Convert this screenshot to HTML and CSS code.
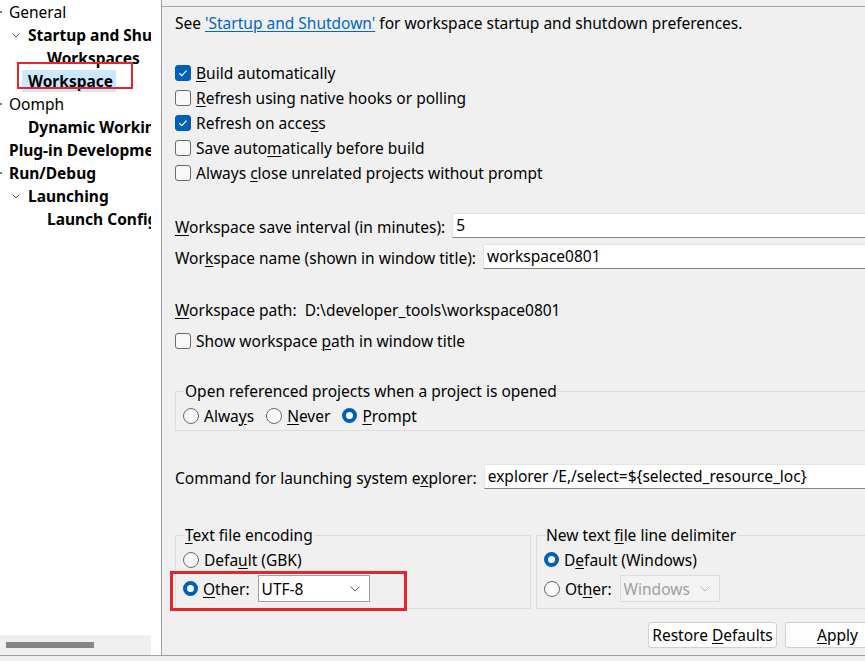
FILE: index.html
```html
<!DOCTYPE html>
<html>
<head>
<meta charset="utf-8">
<link rel="stylesheet" href="styles.css">
</head>
<body>
<div class="window">
  <div class="main">
    <div class="tree-pane">
      <div class="tree">
        <div class="node lvl0"><span class="twisty dot"></span><span class="label">General</span></div>
        <div class="node lvl1 bold"><svg class="chev" width="8" height="5" viewBox="0 0 8 5"><path d="M0.5 0.5 L4 4 L7.5 0.5" fill="none" stroke="#555" stroke-width="1"/></svg><span class="label">Startup and Shutdown</span></div>
        <div class="node lvl2 bold"><span class="label">Workspaces</span></div>
        <div class="node lvl1 bold marked"><span class="label sel">Workspace</span></div>
        <div class="node lvl0"><span class="twisty dot"></span><span class="label">Oomph</span></div>
        <div class="node lvl1 bold"><span class="label">Dynamic Working Sets</span></div>
        <div class="node lvl0 bold"><span class="label">Plug-in Development</span></div>
        <div class="node lvl0 bold"><span class="twisty dot"></span><span class="label">Run/Debug</span></div>
        <div class="node lvl1 bold"><svg class="chev" width="8" height="5" viewBox="0 0 8 5"><path d="M0.5 0.5 L4 4 L7.5 0.5" fill="none" stroke="#555" stroke-width="1"/></svg><span class="label">Launching</span></div>
        <div class="node lvl2 bold"><span class="label">Launch Configurations</span></div>
      </div>
      <div class="hscroll"><div class="thumb"></div></div>
    </div>
    <div class="right">
      <div class="page">
        <div class="intro">See <a class="link">'Startup and Shutdown'</a> for workspace startup and shutdown preferences.</div>

        <div class="checks">
          <div class="check-row"><span class="cb on"><svg width="16" height="16" viewBox="0 0 16 16"><path d="M4.3 8.3 L6.8 10.6 L11.6 5.6" fill="none" stroke="#fff" stroke-width="1.2"/></svg></span><span><u>B</u>uild automatically</span></div>
          <div class="check-row"><span class="cb"></span><span><u>R</u>efresh using native hooks or polling</span></div>
          <div class="check-row"><span class="cb on"><svg width="16" height="16" viewBox="0 0 16 16"><path d="M4.3 8.3 L6.8 10.6 L11.6 5.6" fill="none" stroke="#fff" stroke-width="1.2"/></svg></span><span>Refresh on acce<u>s</u>s</span></div>
          <div class="check-row"><span class="cb"></span><span>Save auto<u>m</u>atically before build</span></div>
          <div class="check-row"><span class="cb"></span><span>Always <u>c</u>lose unrelated projects without prompt</span></div>
        </div>

        <div class="field-row first"><span class="flabel"><u>W</u>orkspace save interval (in minutes):</span><span class="input">5</span></div>
        <div class="field-row second"><span class="flabel">Wor<u>k</u>space name (shown in window title):</span><span class="input">workspace0801</span></div>

        <div class="path-row"><u>W</u>orkspace path:&nbsp; D:\developer_tools\workspace0801</div>
        <div class="check-row show-path"><span class="cb"></span><span>Show workspace <u>p</u>ath in window title</span></div>

        <fieldset class="group open-group">
          <legend>Open referenced projects when a project is opened</legend>
          <div class="radio-line">
            <span class="radio-item"><span class="rb"></span>Alwa<u>y</u>s</span>
            <span class="radio-item"><span class="rb"></span><u>N</u>ever</span>
            <span class="radio-item"><span class="rb on"></span><u>P</u>rompt</span>
          </div>
        </fieldset>

        <div class="field-row cmd"><span class="flabel">Command for launching system e<u>x</u>plorer:</span><span class="input">explorer /E,/select=${selected_resource_loc}</span></div>

        <div class="groups">
          <fieldset class="group enc">
            <legend><u>T</u>ext file encoding</legend>
            <div class="radio-row"><span class="rb"></span>Defa<u>u</u>lt (GBK)</div>
            <div class="radio-row combo-row marked2"><span class="rb on"></span><u>O</u>ther:<span class="combo"><span class="cval">UTF-8</span><svg width="10" height="6" viewBox="0 0 10 6"><path d="M0.5 0.5 L5 5 L9.5 0.5" fill="none" stroke="#606060" stroke-width="1"/></svg></span></div>
          </fieldset>
          <fieldset class="group delim">
            <legend>New text <u>f</u>ile line delimiter</legend>
            <div class="radio-row"><span class="rb on"></span>D<u>e</u>fault (Windows)</div>
            <div class="radio-row combo-row"><span class="rb"></span>Ot<u>h</u>er:<span class="combo disabled"><span class="cval">Windows</span><svg width="10" height="6" viewBox="0 0 10 6"><path d="M0.5 0.5 L5 5 L9.5 0.5" fill="none" stroke="#b8b8b8" stroke-width="1"/></svg></span></div>
          </fieldset>
        </div>

        <div class="buttons">
          <span class="btn restore">Restore <u>D</u>efaults</span>
          <span class="btn apply"><u>A</u>pply</span>
        </div>
      </div>
    </div>
  </div>
  <div class="status"></div>
</div>
</body>
</html>
```

FILE: styles.css
```css
html, body {
  margin: 0;
  padding: 0;
}
body {
  background: #f0f0f0;
  font-family: "Noto Sans", "Open Sans", sans-serif;
  font-size: 15.5px;
  color: #000;
  overflow: hidden;
}
u { text-decoration: underline; text-underline-offset: 2px; text-decoration-thickness: 1px; }
.window {
  width: 865px;
  height: 661px;
  display: flex;
  flex-direction: column;
}
.main {
  height: 655px;
  display: flex;
  border-bottom: 1px solid #a0a0a0;
}
.status { flex: 1; background: #f0f0f0; }

/* ---------- tree ---------- */
.tree-pane {
  width: 161px;
  background: #fff;
  border-right: 1px solid #a0a0a0;
  display: flex;
  flex-direction: column;
  justify-content: space-between;
}
.tree {
  width: 151px;
  overflow: hidden;
  white-space: nowrap;
}
.node {
  height: 23px;
  display: flex;
  align-items: center;
  position: relative;
}
.node.bold { font-weight: 700; }
.lvl0 { padding-left: 9px; }
.lvl1 { padding-left: 28px; }
.lvl2 { padding-left: 47px; }
.twisty.dot {
  position: absolute;
  left: 0;
  top: 11px;
  width: 2px;
  height: 2px;
  background: #777;
}
.chev {
  position: absolute;
  left: 12px;
  top: 10px;
}
.label.sel {
  background: #cce8ff;
  margin-left: -6px;
  padding: 0 3px 0 6px;
  height: 22px;
  line-height: 22px;
}
.marked::after {
  content: "";
  position: absolute;
  left: 17px;
  top: -7px;
  width: 112px;
  height: 23px;
  border: 2px solid #e5242b;
}
.hscroll {
  height: 20px;
  width: 151px;
  background: #f0f0f0;
  display: flex;
  align-items: center;
}
.thumb {
  margin-left: 6px;
  width: 88px;
  height: 6px;
  background: #858585;
}

/* ---------- right page ---------- */
.right {
  flex: 1;
  overflow: hidden;
  background: #f0f0f0;
  padding-top: 6px;
}
.page {
  border-top: 1px solid #a8a8a8;
  padding: 6px 0 0 13px;
  margin-right: -40px;
  line-height: 20px;
}
.intro { height: 20px; white-space: nowrap; }
.link { color: #0066cc; text-decoration: underline; text-underline-offset: 2px; }

.checks { margin-top: 27px; }
.check-row {
  height: 25px;
  display: flex;
  align-items: center;
  white-space: nowrap;
}
.cb {
  width: 14px;
  height: 14px;
  border: 1px solid #6a6a6a;
  border-radius: 3px;
  background: #f9f9f9;
  margin-right: 5px;
  flex: none;
  position: relative;
}
.cb.on {
  background: #005fb8;
  border-color: #005fb8;
}
.cb svg { position: absolute; left: -1px; top: -1px; }

.field-row {
  display: flex;
  align-items: center;
  white-space: nowrap;
}
.field-row.first { margin-top: 28px; }
.field-row.second { margin-top: 6px; }
.field-row.cmd { margin-top: 33px; }
.flabel { padding-top: 2px; margin-right: 7px; }
.input {
  flex: 1;
  height: 23px;
  line-height: 23px;
  background: #fff;
  border: 1px solid #e4e4e4;
  border-bottom-color: #868686;
  padding-left: 3px;
}

.path-row { margin-top: 31px; height: 20px; white-space: nowrap; }
.check-row.show-path { margin-top: 8px; }

.group {
  margin: 0;
  border: 1px solid #dcdcdc;
  padding: 0 0 0 7px;
  min-width: 0;
}
.group legend {
  padding: 0 1px;
  margin-left: 1px;
  line-height: 20px;
  white-space: nowrap;
}
.open-group { margin-top: 28px; padding-bottom: 2px; }
.radio-line {
  height: 25px;
  display: flex;
  align-items: center;
  margin-top: 2px;
}
.radio-item {
  display: flex;
  align-items: center;
  margin-right: 12px;
}
.rb {
  width: 14px;
  height: 14px;
  border: 1px solid #6a6a6a;
  border-radius: 50%;
  background: #f9f9f9;
  margin-right: 5px;
  flex: none;
  box-sizing: content-box;
}
.rb.on {
  background: #fff;
  border: 4.5px solid #005fb8;
  width: 7px;
  height: 7px;
}

.groups {
  display: flex;
  gap: 5px;
  margin-top: 36px;
}
.enc { width: 347px; flex: none; }
.delim { flex: 1; }
.enc, .delim { padding-bottom: 6px; }
.radio-row {
  height: 25px;
  display: flex;
  align-items: center;
  white-space: nowrap;
  margin-top: 2px;
}
.combo-row { height: 27px; margin-top: 3px; position: relative; }
.combo {
  margin-left: 8px;
  height: 25px;
  border: 1px solid #a0a0a0;
  background: #fff;
  display: flex;
  align-items: center;
  justify-content: space-between;
  padding: 0 9px 0 3px;
  width: 98px;
}
.combo.disabled {
  background: #f3f3f3;
  border-color: #dcdcdc;
  color: #a0a0a0;
  width: 86px;
}
.combo svg { flex: none; }
.marked2::after {
  content: "";
  position: absolute;
  left: -13px;
  top: -4px;
  width: 231px;
  height: 34px;
  border: 3px solid #e5242b;
}

.buttons {
  display: flex;
  justify-content: flex-end;
  gap: 8px;
  margin-top: 13px;
  margin-right: 15px;
}
.btn {
  height: 24px;
  line-height: 24px;
  border: 1px solid #d0d0d0;
  border-radius: 3px;
  background: #fdfdfd;
  text-align: center;
  white-space: nowrap;
}
.restore { width: 127px; }
.apply { width: 103px; }
```
